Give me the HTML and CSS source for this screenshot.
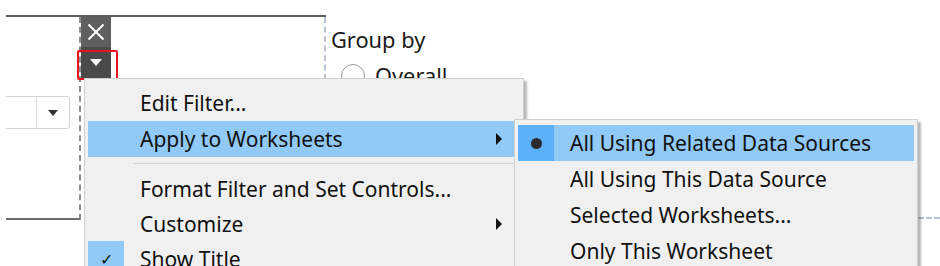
FILE: index.html
```html
<!DOCTYPE html>
<html>
<head>
  <title>Filter Menu</title>
  <link rel="stylesheet" href="styles.css">
</head>
<body>
  <div class="workspace">
    <div class="filter-card">
      <div class="filter-left">
        <div class="combo">
          <span class="combo-value"></span>
          <span class="combo-arrow"></span>
        </div>
      </div>
      <div class="filter-right">
        <div class="card-tools">
          <div class="tool-btn close-btn">
            <svg width="18" height="18" viewBox="0 0 18 18"><path d="M1.5 1.5 L16.5 16.5 M16.5 1.5 L1.5 16.5" stroke="#fff" stroke-width="2" fill="none"/></svg>
          </div>
          <div class="tool-btn menu-btn">
            <svg width="12" height="8" viewBox="0 0 12 8"><path d="M0 0 H12 L6 7 Z" fill="#fff"/></svg>
          </div>
        </div>
      </div>
    </div>

    <div class="group-by">
      <div class="group-title">Group by</div>
      <div class="radio-row"><span class="radio"></span>Overall</div>
    </div>

    <div class="next-card"></div>

    <div class="marker"></div>

    <div class="menu main-menu">
      <div class="menu-item"><span class="menu-icon"></span>Edit Filter...</div>
      <div class="menu-item active"><span class="menu-icon"></span>Apply to Worksheets<span class="sub-arrow"></span></div>
      <div class="menu-sep"></div>
      <div class="menu-item"><span class="menu-icon"></span>Format Filter and Set Controls...</div>
      <div class="menu-item"><span class="menu-icon"></span>Customize<span class="sub-arrow"></span></div>
      <div class="menu-item"><span class="menu-icon checked">&#10003;</span>Show Title</div>
    </div>

    <div class="menu sub-menu">
      <div class="menu-item active"><span class="menu-icon checked"><span class="dot"></span></span>All Using Related Data Sources</div>
      <div class="menu-item"><span class="menu-icon"></span>All Using This Data Source</div>
      <div class="menu-item"><span class="menu-icon"></span>Selected Worksheets...</div>
      <div class="menu-item"><span class="menu-icon"></span>Only This Worksheet</div>
    </div>
  </div>
</body>
</html>
```

FILE: styles.css
```css
body {
  margin: 0;
  background: #fff;
  font-family: "Noto Sans", "Open Sans", sans-serif;
  color: #1a1a1a;
}
.workspace {
  position: relative;
  width: 940px;
  height: 266px;
  overflow: hidden;
  display: flex;
  align-items: flex-start;
}
.filter-card {
  display: flex;
  margin: 15px 0 0 6px;
  width: 320px;
  height: 205px;
  border-top: 2px solid #5c5c5c;
  box-sizing: border-box;
}
.filter-left {
  width: 75px;
  height: 100%;
  border-right: 2px dashed #8c8c8c;
  border-bottom: 2px solid #6e6e6e;
  box-sizing: border-box;
  padding-top: 79px;
}
.combo {
  display: flex;
  width: 64px;
  height: 33px;
  border: 1px solid #d4d4d4;
  border-left: none;
  border-radius: 0 3px 3px 0;
  box-sizing: border-box;
}
.combo-value {
  flex: 1;
  border-right: 1px solid #dcdcdc;
}
.combo-arrow {
  width: 32px;
  display: flex;
  align-items: center;
  justify-content: center;
}
.combo-arrow::before {
  content: "";
  border-left: 5px solid transparent;
  border-right: 5px solid transparent;
  border-top: 6px solid #333;
}
.filter-right {
  flex: 1;
  height: 63px;
  border-right: 2px dashed #b9c3d6;
}
.card-tools {
  display: flex;
  flex-direction: column;
  width: 30px;
}
.tool-btn {
  height: 31px;
  display: flex;
  align-items: center;
  justify-content: center;
}
.close-btn {
  background: #5f5f5f;
  height: 30px;
}
.menu-btn {
  background: #4a4a4a;
}
.group-by {
  margin: 25px 0 0 5px;
  font-size: 21.8px;
}
.group-title {
  line-height: 30px;
}
.radio-row {
  display: flex;
  align-items: center;
  gap: 10px;
  margin-top: 6px;
  margin-left: 10px;
}
.radio {
  width: 22px;
  height: 22px;
  border: 1px solid #9a9a9a;
  border-radius: 50%;
}
.next-card {
  position: absolute;
  left: 918px;
  top: 217px;
  width: 30px;
  border-top: 2px dashed #b9c3d6;
}
.marker {
  position: absolute;
  left: 77px;
  top: 50px;
  width: 37px;
  height: 26px;
  border: 2px solid #e8141c;
  border-radius: 2px;
}
.menu {
  position: absolute;
  background: #f0f0f0;
  border: 1px solid #cfcfcf;
  box-shadow: 3px 3px 2px rgba(0, 0, 0, 0.28);
  padding: 5px 3px;
  font-size: 21px;
  color: #111;
}
.main-menu {
  left: 84px;
  top: 78px;
  width: 432px;
}
.sub-menu {
  left: 514px;
  top: 119px;
  width: 396px;
}
.menu-item {
  display: flex;
  align-items: center;
  height: 36px;
  white-space: nowrap;
  position: relative;
}
.main-menu .menu-item:first-child {
  height: 37px;
}
.main-menu .menu-sep ~ .menu-item {
  height: 35px;
}
.menu-item.active {
  background: #91c9f7;
}
.menu-icon {
  width: 36px;
  height: 100%;
  margin-right: 16px;
  display: flex;
  align-items: center;
  justify-content: center;
  font-size: 16px;
}
.menu-icon.checked {
  background: #91c9f7;
}
.menu-item.active .menu-icon.checked {
  background: #5cb1f8;
}
.dot {
  width: 11px;
  height: 11px;
  border-radius: 50%;
  background: #2a2a2a;
}
.sub-arrow {
  position: absolute;
  right: 18px;
  top: 50%;
  margin-top: -6px;
  border-top: 6px solid transparent;
  border-bottom: 6px solid transparent;
  border-left: 6px solid #111;
}
.menu-sep {
  height: 1px;
  background: #d0d0d0;
  margin: 6px 0 7px 46px;
}
```
